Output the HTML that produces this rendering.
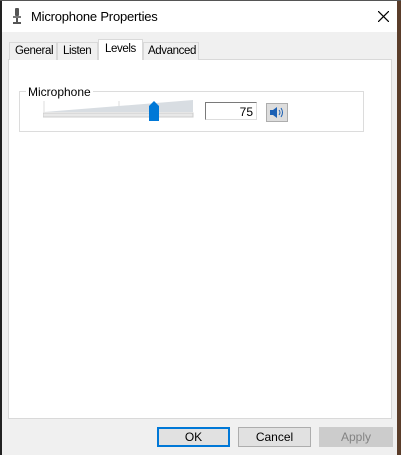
<!DOCTYPE html>
<html><head><style>
*{margin:0;padding:0;box-sizing:border-box}
body{width:401px;height:455px;overflow:hidden;background:#5a3d2a;font-family:"Liberation Sans",sans-serif;font-size:12px;color:#000;position:relative}
.a{position:absolute}
.t{letter-spacing:-0.4px;font-size:11.5px}
</style></head><body>
<div class="a" style="left:0;top:0;width:397px;height:455px;background:#222"></div>
<div class="a" style="left:2px;top:1px;width:395px;height:454px;background:#f0f0f0"></div>
<div class="a" style="left:2px;top:1px;width:395px;height:31px;background:#fff"></div>
<div class="a" style="left:0;top:0;width:401px;height:1px;background:#555"></div>
<svg class="a" style="left:12px;top:8px" width="10" height="16"><rect x="3" y="0" width="4" height="8" rx="1" fill="#555"/><rect x="1" y="8" width="8" height="2" fill="#777"/><rect x="4" y="10" width="2" height="4" fill="#555"/><rect x="1" y="14" width="8" height="2" fill="#555"/></svg>
<div class="a" style="left:31px;top:9px;font-size:13px;letter-spacing:-0.2px">Microphone Properties</div>
<svg class="a" style="left:378px;top:11px" width="11" height="11"><path d="M0 0L11 11M11 0L0 11" stroke="#000" stroke-width="1.2"/></svg>
<div class="a" style="left:8px;top:59px;width:384px;height:360px;background:#fff;border:1px solid #d9d9d9"></div>
<div class="a t" style="left:9px;top:42px;width:48px;height:18px;border:1px solid #d9d9d9;border-bottom:none;background:#f0f0f0;padding:2px 0 0 5px">General</div>
<div class="a t" style="left:57px;top:42px;width:41px;height:18px;border:1px solid #d9d9d9;border-bottom:none;background:#f0f0f0;padding:2px 0 0 5px">Listen</div>
<div class="a t" style="left:98px;top:39px;width:45px;height:21px;border:1px solid #d9d9d9;border-bottom:none;background:#fff;padding:3px 0 0 6px">Levels</div>
<div class="a t" style="left:143px;top:42px;width:56px;height:18px;border:1px solid #d9d9d9;border-bottom:none;background:#f0f0f0;padding:2px 0 0 4px">Advanced</div>
<div class="a" style="left:19px;top:91px;width:345px;height:41px;border:1px solid #dcdcdc"></div>
<div class="a" style="left:26px;top:85px;background:#fff;padding:0 2px">Microphone</div>
<svg class="a" style="left:43px;top:98px" width="152" height="26"><line x1="1" y1="3" x2="1" y2="14" stroke="#ddd"/><line x1="76" y1="3" x2="76" y2="14" stroke="#ddd"/><polygon points="1,14 150,2 150,14" fill="#d8dde2"/><rect x="0" y="15" width="150" height="4" fill="#e8e8e8" stroke="#ccc"/><path d="M106 8L111 3L116 8V23H106Z" fill="#0078d7"/></svg>
<div class="a" style="left:205px;top:102px;width:52px;height:18px;border:1px solid #7a7a7a;border-right-color:#ddd;border-bottom-color:#ddd;text-align:right;padding:2px 3px 0 0">75</div>
<div class="a" style="left:266px;top:103px;width:22px;height:19px;background:#ddd;border:1px solid #adadad"></div>
<svg class="a" style="left:269px;top:106px" width="16" height="13"><path d="M1 4H4L8 1V12L4 9H1Z" fill="#1a5fb4"/><path d="M10 4Q12 6.5 10 9M12 2Q15 6.5 12 11" stroke="#1a5fb4" fill="none"/></svg>
<div class="a" style="left:157px;top:427px;width:73px;height:20px;border:2px solid #0078d7;background:#e1e1e1;text-align:center;line-height:16px">OK</div>
<div class="a" style="left:238px;top:427px;width:73px;height:20px;border:1px solid #adadad;background:#e1e1e1;text-align:center;line-height:18px">Cancel</div>
<div class="a" style="left:319px;top:427px;width:74px;height:20px;border:1px solid #ccc;background:#ccc;color:#838383;text-align:center;line-height:18px">Apply</div>
</body></html>
